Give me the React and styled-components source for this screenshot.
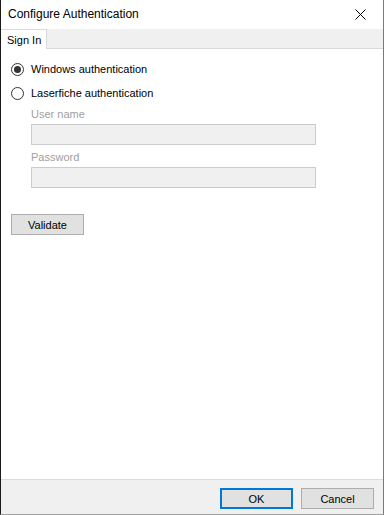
import React from "react";
import styled, { createGlobalStyle } from "styled-components";

const GlobalStyle = createGlobalStyle`
    html, body {
        margin: 0;
        padding: 0;
        background: #ffffff;
    }
    * {
        box-sizing: border-box;
    }
`;

function Dialog() {
    return (
        <Window>
            <TitleBar>
                <Title>Configure Authentication</Title>
                <CloseButton aria-label="Close">
                    <svg width="11" height="11" viewBox="0 0 11 11">
                        <path d="M0.5 0.5 L10.5 10.5 M10.5 0.5 L0.5 10.5" stroke="#000" strokeWidth="1" fill="none" />
                    </svg>
                </CloseButton>
            </TitleBar>
            <TabStrip>
                <Tab $active>Sign In</Tab>
            </TabStrip>
            <Content>
                <RadioRow>
                    <Radio $checked />
                    <RadioLabel>Windows authentication</RadioLabel>
                </RadioRow>
                <RadioRow>
                    <Radio />
                    <RadioLabel>Laserfiche authentication</RadioLabel>
                </RadioRow>
                <Fields>
                    <FieldLabel>User name</FieldLabel>
                    <TextBox disabled />
                    <FieldLabel>Password</FieldLabel>
                    <TextBox disabled type="password" />
                </Fields>
                <Button $width={73}>Validate</Button>
            </Content>
            <Footer>
                <Button $width={73} $primary>OK</Button>
                <Button $width={73}>Cancel</Button>
            </Footer>
        </Window>
    );
}

export default function App() {
    return (
        <>
            <GlobalStyle />
            <Dialog />
        </>
    );
}

const Window = styled.div`
    width: 384px;
    height: 515px;
    display: flex;
    flex-direction: column;
    background: #ffffff;
    border-left: 1px solid #1a1a1a;
    border-right: 1px solid #7a7a7a;
    border-bottom: 1px solid #a0a0a0;
    font-family: "Liberation Sans", Arial, sans-serif;
    font-size: 11px;
    color: #000;
`;

const TitleBar = styled.div`
    height: 29px;
    display: flex;
    align-items: center;
    justify-content: space-between;
    padding: 0 0 0 7px;
`;

const Title = styled.div`
    font-size: 12px;
    margin-top: -2px;
`;

const CloseButton = styled.div`
    width: 46px;
    height: 29px;
    display: flex;
    align-items: center;
    justify-content: center;
    margin-top: -1px;
`;

const TabStrip = styled.div`
    height: 20px;
    display: flex;
    align-items: flex-end;
    background: #f0f0f0;
    border-bottom: 1px solid #d9d9d9;
`;

const Tab = styled.div`
    height: 20px;
    margin-bottom: -1px;
    padding: 4px 0 0 6px;
    width: 46px;
    white-space: nowrap;
    background: ${(p) => (p.$active ? "#ffffff" : "#f0f0f0")};
    border-right: 1px solid #d9d9d9;
    border-top: 1px solid #d9d9d9;
    font-size: 11px;
    line-height: 13px;
`;

const Content = styled.div`
    flex: 1;
    padding: 12px 0 0 10px;
    display: flex;
    flex-direction: column;
    align-items: flex-start;
`;

const RadioRow = styled.div`
    display: flex;
    align-items: center;
    gap: 7px;
    height: 16px;
    margin-bottom: 8px;
`;

const Radio = styled.span`
    width: 13px;
    height: 13px;
    border-radius: 50%;
    border: 1px solid #333;
    background: #fff;
    position: relative;
    &::after {
        content: "";
        display: ${(p) => (p.$checked ? "block" : "none")};
        position: absolute;
        left: 2px;
        top: 2px;
        width: 7px;
        height: 7px;
        border-radius: 50%;
        background: #333;
    }
`;

const RadioLabel = styled.span`
    font-size: 11px;
`;

const Fields = styled.div`
    display: flex;
    flex-direction: column;
    padding-left: 20px;
    margin-top: -1px;
`;

const FieldLabel = styled.div`
    color: #a0a0a0;
    font-size: 11px;
    height: 13px;
    margin-bottom: 3px;
`;

const TextBox = styled.input`
    width: 285px;
    height: 21px;
    background: #f0f0f0;
    border: 1px solid #cccccc;
    margin: 0 0 6px 0;
    padding: 0;
    outline: none;
`;

const Button = styled.button`
    width: ${(p) => p.$width}px;
    height: 21px;
    padding: 0;
    background: #e1e1e1;
    border: ${(p) => (p.$primary ? "2px solid #0078d7" : "1px solid #adadad")};
    font-family: "Liberation Sans", Arial, sans-serif;
    font-size: 11px;
    color: #000;
    margin-top: 20px;
`;

const Footer = styled.div`
    height: 35px;
    background: #f0f0f0;
    border-top: 1px solid #dcdcdc;
    display: flex;
    justify-content: flex-end;
    align-items: flex-start;
    gap: 8px;
    padding: 8px 9px 0 0;
    & > button {
        margin-top: 0;
    }
`;
